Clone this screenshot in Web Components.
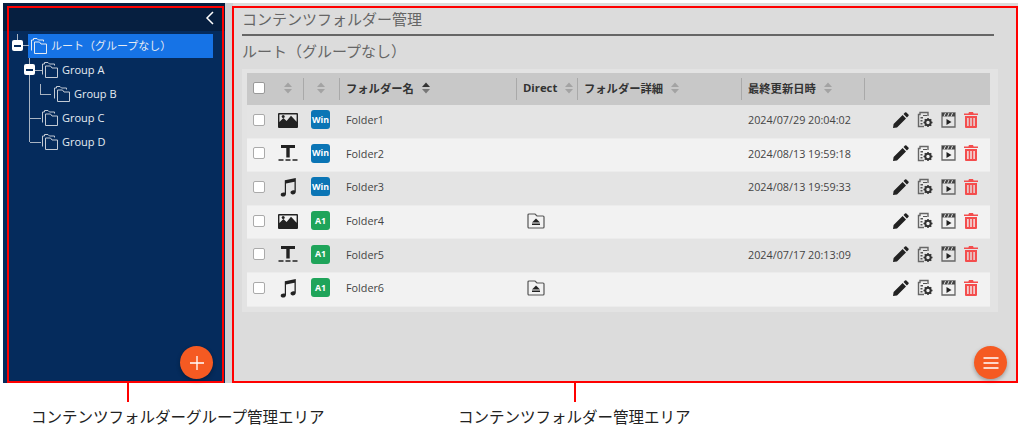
<!DOCTYPE html>
<html lang="ja">
<head>
<meta charset="utf-8">
<style>
  html, body { margin: 0; padding: 0; background: #fff; }
  body { font-family: "Open Sans", "Noto Sans CJK JP", sans-serif; width: 1024px; height: 432px; overflow: hidden; }
</style>
</head>
<body>
<manual-figure>
  <group-panel slot="left">
    <tree-node label="ルート（グループなし）" depth="0" toggle selected></tree-node>
    <tree-node label="Group A" depth="1" toggle></tree-node>
    <tree-node label="Group B" depth="2" last></tree-node>
    <tree-node label="Group C" depth="1"></tree-node>
    <tree-node label="Group D" depth="1" last></tree-node>
  </group-panel>
  <folder-panel slot="right">
    <folder-row media="image" player="Win" name="Folder1" date="2024/07/29 20:04:02"></folder-row>
    <folder-row media="text" player="Win" name="Folder2" date="2024/08/13 19:59:18"></folder-row>
    <folder-row media="music" player="Win" name="Folder3" date="2024/08/13 19:59:33"></folder-row>
    <folder-row media="image" player="A1" name="Folder4" direct></folder-row>
    <folder-row media="text" player="A1" name="Folder5" date="2024/07/17 20:13:09"></folder-row>
    <folder-row media="music" player="A1" name="Folder6" direct></folder-row>
  </folder-panel>
</manual-figure>

<script>
  // Shared icon markup, all drawn on their own small viewBox
  const ICONS = {
    folders: `<svg width="18" height="16" viewBox="0 0 18 16" fill="none" stroke="currentColor" stroke-width="1">
      <path d="M1.500 12.500V2H3.500V.5H7L8.500 2H13.500V3.500"/>
      <path d="M4.500 15.500V4H9.500L11 6H16.500V15.500Z"/></svg>`,
    image: `<svg width="20" height="16" viewBox="0 0 20 16"><path fill="#222" d="M1 1h18a1 1 0 0 1 1 1v13a1 1 0 0 1-1 1H1a1 1 0 0 1-1-1V2a1 1 0 0 1 1-1zm.4 1.400V10l4-4 3.200 3 4.400-5.200 5.600 6V2.400z"/><circle cx="5.200" cy="4.600" r="1.500" fill="#222"/></svg>`,
    text: `<svg width="20" height="18" viewBox="0 0 20 18"><path fill="#222" d="M3 1h14v3h-5.300v9.500H8.300V4H3z"/><path fill="#222" d="M.5 15.200h5v1.600h-5zM7.500 15.200h5v1.600h-5zM14.500 15.200h5v1.600h-5z"/></svg>`,
    music: `<svg width="18" height="20" viewBox="0 0 18 20"><path fill="#222" d="M5.800 3.200 16.800 1v13.800c0 1.600-1.400 2.600-3 2.600-1.300 0-2.300-.7-2.300-1.800 0-1.400 1.400-2.300 3-2.300.5 0 .8.100 1 .2V4.800L7 6.600V17c0 1.600-1.400 2.600-3 2.600-1.300 0-2.300-.7-2.300-1.800 0-1.400 1.400-2.300 3-2.300.5 0 .8.100 1.100.2z"/></svg>`,
    direct: `<svg width="18" height="16" viewBox="0 0 18 16" fill="none"><path stroke="#555" stroke-width="1.200" d="M2 1h6l2 2h6a1 1 0 0 1 1 1v10a1 1 0 0 1-1 1H2a1 1 0 0 1-1-1V2a1 1 0 0 1 1-1z"/><path fill="#222" d="M9 5.500 13 9.500H5zM5 10.500h8V12H5z"/></svg>`,
    pencil: `<svg width="16" height="16" viewBox="0 0 16 16"><path fill="#222" d="M12 .6a1 1 0 0 1 1.400 0l2 2a1 1 0 0 1 0 1.400l-1.500 1.500-3.400-3.400zM9.600 3 13 6.400 4 15.400 0 16l.6-4z"/></svg>`,
    settings: `<svg width="16" height="17" viewBox="0 0 16 17"><path fill="none" stroke="#666" stroke-width="1.400" d="M7 15.500H1.500V3.500H3V1.500H11V5"/><path fill="#555" d="M3.500 6h2.500v1.400H3.500zM3.500 9h2v1.400h-2zM3.500 12h2v1.400h-2zM6 4h4v1H6z"/><circle cx="11" cy="11.500" r="2.700" fill="none" stroke="#333" stroke-width="2"/><path stroke="#333" stroke-width="1.500" d="M11 7v2M11 14v2M6.500 11.500h2M13.500 11.500h2M7.800 8.300l1.400 1.400M12.800 13.300l1.400 1.400M7.800 14.700l1.400-1.400M12.800 9.700l1.400-1.400"/></svg>`,
    clapper: `<svg width="15" height="16" viewBox="0 0 15 16"><path fill="none" stroke="#666" stroke-width="1.300" d="M1 1h13v14H1z"/><path fill="#444" d="M1 1h13v3.500H1z"/><path stroke="#ddd" stroke-width="1" d="M3 4.500 4.500 1M6.500 4.500 8 1M10 4.500 11.500 1"/><path fill="#222" d="M5.500 7l5 3-5 3z"/></svg>`,
    trash: `<svg width="14" height="16" viewBox="0 0 14 16"><path fill="#f44d4d" d="M5 0h4l.6 1.400H14V3H0V1.400h4.400zM1 4h12v11a1 1 0 0 1-1 1H2a1 1 0 0 1-1-1zm2.200 2v8h1.400V6zm3.100 0v8h1.400V6zm3.100 0v8h1.400V6z"/></svg>`,
    sort: `<svg width="8" height="12" viewBox="0 0 8 12"><path class="up" d="M4 .5 8 5H0z"/><path class="down" d="M4 11.500 0 7h8z"/></svg>`,
  };

  class ManualFigure extends HTMLElement {
    constructor() {
      super();
      this.attachShadow({ mode: "open" });
      this.shadowRoot.innerHTML = `
        <style>
          :host { display: block; width: 1024px; height: 432px; color: #222; }
          .screen { display: flex; height: 380px; margin: 3px 6px 0 3px; background: #cfcfd2; position: relative; }
          .left { display: flex; width: 222px; flex: none; }
          .right { display: flex; flex: 1; min-width: 0; margin-left: 8px; }
          .frame { position: absolute; top: 3px; bottom: 0; border: 2px solid #f00; box-sizing: border-box; pointer-events: none; }
          .f1 { left: 4px; width: 217px; }
          .f2 { left: 229px; right: 0; }
          .notes { position: relative; font-size: 15.500px; color: #222; height: 49px; }
          .notes span { position: absolute; top: 24px; line-height: 20px; white-space: nowrap; }
          .notes i { position: absolute; top: 0; width: 2px; height: 19px; background: #f00; }
        </style>
        <div class="screen">
          <div class="left"><slot name="left"></slot></div>
          <div class="right"><slot name="right"></slot></div>
          <div class="frame f1"></div>
          <div class="frame f2"></div>
        </div>
        <div class="notes">
          <i style="left:127px"></i>
          <span style="left:31px">コンテンツフォルダーグループ管理エリア</span>
          <i style="left:574px"></i>
          <span style="left:458px">コンテンツフォルダー管理エリア</span>
        </div>`;
    }
  }

  class FabButton extends HTMLElement {
    constructor() {
      super();
      this.attachShadow({ mode: "open" });
      const glyph = this.getAttribute("icon") === "plus"
        ? `<path stroke="#fff" stroke-width="1.300" d="M8 1v14M1 8h14"/>`
        : `<path stroke="#fff" stroke-width="1.500" d="M.5 3h15M.5 8h15M.5 13h15"/>`;
      this.shadowRoot.innerHTML = `
        <style>
          :host { position: absolute; display: flex; align-items: center; justify-content: center;
                  width: 33px; height: 33px; border-radius: 50%; background: #f55a22;
                  box-shadow: 0 2px 4px rgba(0,0,0,.3); bottom: 4px; }
        </style>
        <svg width="16" height="16" viewBox="0 0 16 16">${glyph}</svg>`;
    }
  }

  class GroupPanel extends HTMLElement {
    constructor() {
      super();
      this.attachShadow({ mode: "open" });
      this.shadowRoot.innerHTML = `
        <style>
          :host { display: flex; flex-direction: column; flex: 1; position: relative; background: #052b5c; }
          .bar { height: 28px; flex: none; background: #061f40; display: flex; justify-content: flex-end; align-items: center; padding: 2px 11px 0 0; box-sizing: border-box; }
          .tree { display: flex; flex-direction: column; padding-top: 3px; }
          fab-button { right: 12px; }
        </style>
        <div class="bar">
          <svg width="9" height="14" viewBox="0 0 9 14" fill="none" stroke="#fff" stroke-width="1.500"><path d="M8 1 2 7l6 6"/></svg>
        </div>
        <div class="tree"><slot></slot></div>
        <fab-button icon="plus"></fab-button>`;
    }
  }

  class TreeNode extends HTMLElement {
    constructor() {
      super();
      this.attachShadow({ mode: "open" });
      const depth = Number(this.getAttribute("depth"));
      const selected = this.hasAttribute("selected");
      const toggle = this.hasAttribute("toggle");
      const last = this.hasAttribute("last");
      this.shadowRoot.innerHTML = `
        <style>
          :host { display: block; height: 24px; position: relative; font-size: 11px; }
          .row { display: flex; align-items: center; height: 24px; gap: 3px; box-sizing: border-box; color: #c3cad4;
                 margin-left: ${depth === 0 ? 25 : depth === 1 ? 38 : 50}px; }
          .row.sel { background: #1673e6; width: 185px; padding-left: 2px; color: #e6ebf2; }
          .label { white-space: nowrap; color: #e6ebf2; margin-bottom: 2px; }
          .tog { position: absolute; width: 11px; height: 11px; border-radius: 2px; background: #fff; display: flex; align-items: center; justify-content: center; z-index: 1; }
          .tog::after { content: ""; width: 7px; height: 2px; background: #052b5c; }
          .ln { position: absolute; background: #aab4c2; }
        </style>
        ${depth === 0 ? `<i class="ln" style="left:14px;top:0;width:1px;height:6px"></i>
          <i class="ln" style="left:20px;top:11px;width:6px;height:1px"></i>
          <span class="tog" style="left:9px;top:6px"></span>` : ""}
        ${depth === 1 ? `<i class="ln" style="left:26px;top:0;width:1px;height:${last ? 12 : 24}px"></i>
          <i class="ln" style="left:27px;top:12px;width:${toggle ? 12 : 11}px;height:1px"></i>` : ""}
        ${depth === 1 && toggle ? `<span class="tog" style="left:21px;top:6px"></span>` : ""}
        ${depth === 2 ? `<i class="ln" style="left:26px;top:0;width:1px;height:24px"></i>
          <i class="ln" style="left:37px;top:2px;width:1px;height:10px"></i>
          <i class="ln" style="left:37px;top:12px;width:11px;height:1px"></i>` : ""}
        <div class="row ${selected ? "sel" : ""}">${ICONS.folders}<span class="label">${this.getAttribute("label")}</span></div>`;
    }
  }

  class SortHead extends HTMLElement {
    constructor() {
      super();
      this.attachShadow({ mode: "open" });
      const active = this.hasAttribute("active");
      this.shadowRoot.innerHTML = `
        <style>
          :host { display: flex; align-items: center; gap: 8px; height: 100%; box-sizing: border-box; padding: 0 0 3px 7px;
                  font-size: 11.300px; font-weight: 700; color: #333; white-space: nowrap; position: relative; }
          :host([center]) { justify-content: center; padding-left: 0; }
          :host([line])::before { content: ""; position: absolute; left: 0; top: 5px; bottom: 5px; width: 1px; background: #a9a9a9; }
          .up, .down { fill: #a3a3a3; }
          ${active ? ".up { fill: #333; } .down { fill: #777; }" : ""}
        </style>
        <slot></slot>${ICONS.sort}`;
    }
  }

  const ROW_COLUMNS = "25px 31px 36px 177px 61px 164px 123px 126px";

  class FolderPanel extends HTMLElement {
    constructor() {
      super();
      this.attachShadow({ mode: "open" });
      this.shadowRoot.innerHTML = `
        <style>
          :host { display: block; flex: 1; position: relative; background: #dcdcdc; padding: 3px 0 0 9px; color: #555; }
          h1 { margin: 2px 24px 0 0; font-size: 15px; font-weight: 400; line-height: 22px; height: 26px; border-bottom: 2px solid #666; color: #666; }
          h2 { margin: 0; font-size: 15px; font-weight: 400; line-height: 22px; padding-top: 4px; color: #666; }
          .wrap { margin: 7px 20px 0 0; padding: 4px 8px 5px 5px; background: #e3e3e3; }
          .head { display: grid; grid-template-columns: ${ROW_COLUMNS}; height: 32px; background: #c8c8c8; align-items: center; }
          .cb { width: 12px; height: 12px; margin: 0 0 3px 6px; border: 1px solid #999; border-radius: 2px; background: #fff; box-sizing: border-box; }
          fab-button { right: 11px; }
        </style>
        <h1>コンテンツフォルダー管理</h1>
        <h2>ルート（グループなし）</h2>
        <div class="wrap">
          <div class="head">
            <div class="cb"></div>
            <sort-head center></sort-head>
            <sort-head center line></sort-head>
            <sort-head line active>フォルダー名</sort-head>
            <sort-head line>Direct</sort-head>
            <sort-head line>フォルダー詳細</sort-head>
            <sort-head line>最終更新日時</sort-head>
            <div style="height:22px;width:1px;background:#a9a9a9"></div>
          </div>
          <slot></slot>
        </div>
        <fab-button icon="menu"></fab-button>`;
    }
  }

  class FolderRow extends HTMLElement {
    constructor() {
      super();
      this.attachShadow({ mode: "open" });
      const player = this.getAttribute("player");
      this.shadowRoot.innerHTML = `
        <style>
          :host { display: grid; grid-template-columns: ${ROW_COLUMNS}; height: 33.600px; padding-bottom: 3px; align-items: center;
                  background: #e4e4e4; font-size: 10.800px; color: #444; border-bottom: 1px solid #ececec; box-sizing: border-box; }
          :host(:nth-child(even)) { background: #f2f2f2; }
          .cb { width: 12px; height: 12px; margin-left: 6px; border: 1px solid #aaa; border-radius: 2px; background: #fff; box-sizing: border-box; }
          .c { display: flex; justify-content: center; align-items: center; }
          .badge { width: 19px; height: 19px; border-radius: 3px; color: #fff; font-weight: 700; font-size: 8.800px;
                   display: flex; align-items: center; justify-content: center; background: ${player === "Win" ? "#0b75b5" : "#1fa45a"}; margin-left: -1px; }
          .t { padding-left: 7px; white-space: nowrap; }
          .direct { padding-left: 11px; display: flex; align-items: center; }
          .acts { display: flex; align-items: center; gap: 8px; padding-left: 29px; }
        </style>
        <div class="cb"></div>
        <div class="c">${ICONS[this.getAttribute("media")]}</div>
        <div class="c"><span class="badge">${player}</span></div>
        <div class="t">${this.getAttribute("name")}</div>
        <div class="direct">${this.hasAttribute("direct") ? ICONS.direct : ""}</div>
        <div></div>
        <div class="t">${this.getAttribute("date") || ""}</div>
        <div class="acts">${ICONS.pencil}${ICONS.settings}${ICONS.clapper}${ICONS.trash}</div>`;
    }
  }

  customElements.define("fab-button", FabButton);
  customElements.define("tree-node", TreeNode);
  customElements.define("group-panel", GroupPanel);
  customElements.define("sort-head", SortHead);
  customElements.define("folder-row", FolderRow);
  customElements.define("folder-panel", FolderPanel);
  customElements.define("manual-figure", ManualFigure);
</script>
</body>
</html>
